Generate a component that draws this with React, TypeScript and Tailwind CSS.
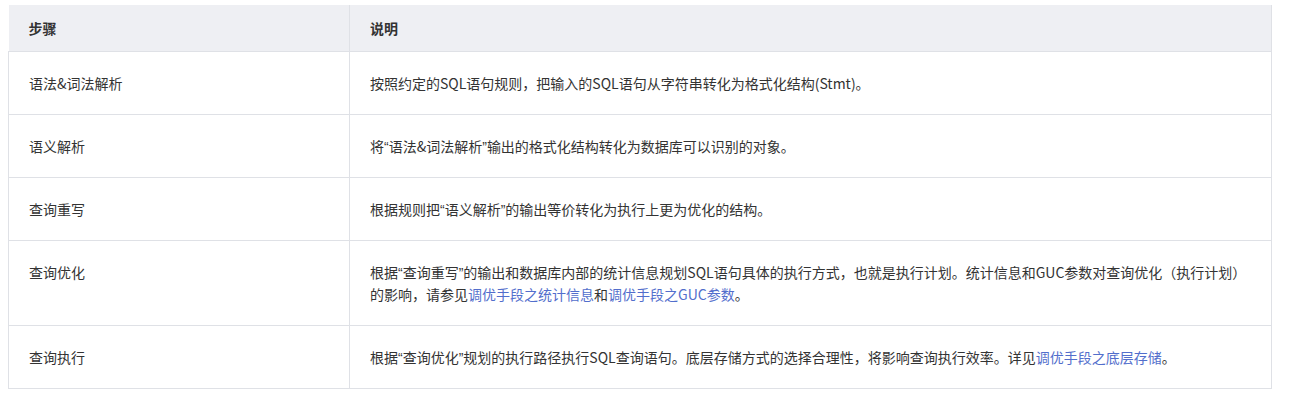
import type { FC, ReactNode } from 'react';

type Row = { step: string; desc: ReactNode };

const Link: FC<{ children: ReactNode }> = ({ children }) => (
  <span className="text-[#526ecc]">{children}</span>
);

// narrow curly quotes, as in the reference font
const Q: FC<{ children: ReactNode }> = ({ children }) => (
  <>
    <span className="font-['Liberation_Sans',sans-serif] leading-none">“</span>
    {children}
    <span className="font-['Liberation_Sans',sans-serif] leading-none">”</span>
  </>
);

const rows: Row[] = [
  {
    step: '语法&词法解析',
    desc: '按照约定的SQL语句规则，把输入的SQL语句从字符串转化为格式化结构(Stmt)。',
  },
  {
    step: '语义解析',
    desc: (
      <>
        将<Q>语法&词法解析</Q>输出的格式化结构转化为数据库可以识别的对象。
      </>
    ),
  },
  {
    step: '查询重写',
    desc: (
      <>
        根据规则把<Q>语义解析</Q>的输出等价转化为执行上更为优化的结构。
      </>
    ),
  },
  {
    step: '查询优化',
    desc: (
      <>
        根据<Q>查询重写</Q>的输出和数据库内部的统计信息规划SQL语句具体的执行方式，也就是执行计划。统计信息和GUC参数对查询优化（执行计划）的影响，请参见
        <Link>调优手段之统计信息</Link>和<Link>调优手段之GUC参数</Link>。
      </>
    ),
  },
  {
    step: '查询执行',
    desc: (
      <>
        根据<Q>查询优化</Q>规划的执行路径执行SQL查询语句。底层存储方式的选择合理性，将影响查询执行效率。详见
        <Link>调优手段之底层存储</Link>。
      </>
    ),
  },
];

const App: FC = () => {
  return (
    <div
      className="min-h-screen bg-white pl-2 pt-[5px] text-[14px] leading-[22px] text-[#333]"
      style={{ fontFamily: '"Microsoft YaHei", "Noto Sans CJK SC", "Noto Sans", sans-serif' }}
    >
      <table className="w-[1264px] table-fixed border-collapse">
        <thead>
          <tr className="bg-[#eeeff3]">
            <th className="w-[341px] border-r border-b border-[#dfe1e6] px-5 py-3 text-left font-bold">
              步骤
            </th>
            <th className="border-r border-b border-[#dfe1e6] px-5 py-3 text-left font-bold">
              说明
            </th>
          </tr>
        </thead>
        <tbody>
          {rows.map((row) => (
            <tr key={row.step}>
              <td className="border border-[#dfe1e6] px-5 py-5 align-top">{row.step}</td>
              <td className="border border-[#dfe1e6] px-5 py-5 align-top">{row.desc}</td>
            </tr>
          ))}
        </tbody>
      </table>
    </div>
  );
};

export default App;
